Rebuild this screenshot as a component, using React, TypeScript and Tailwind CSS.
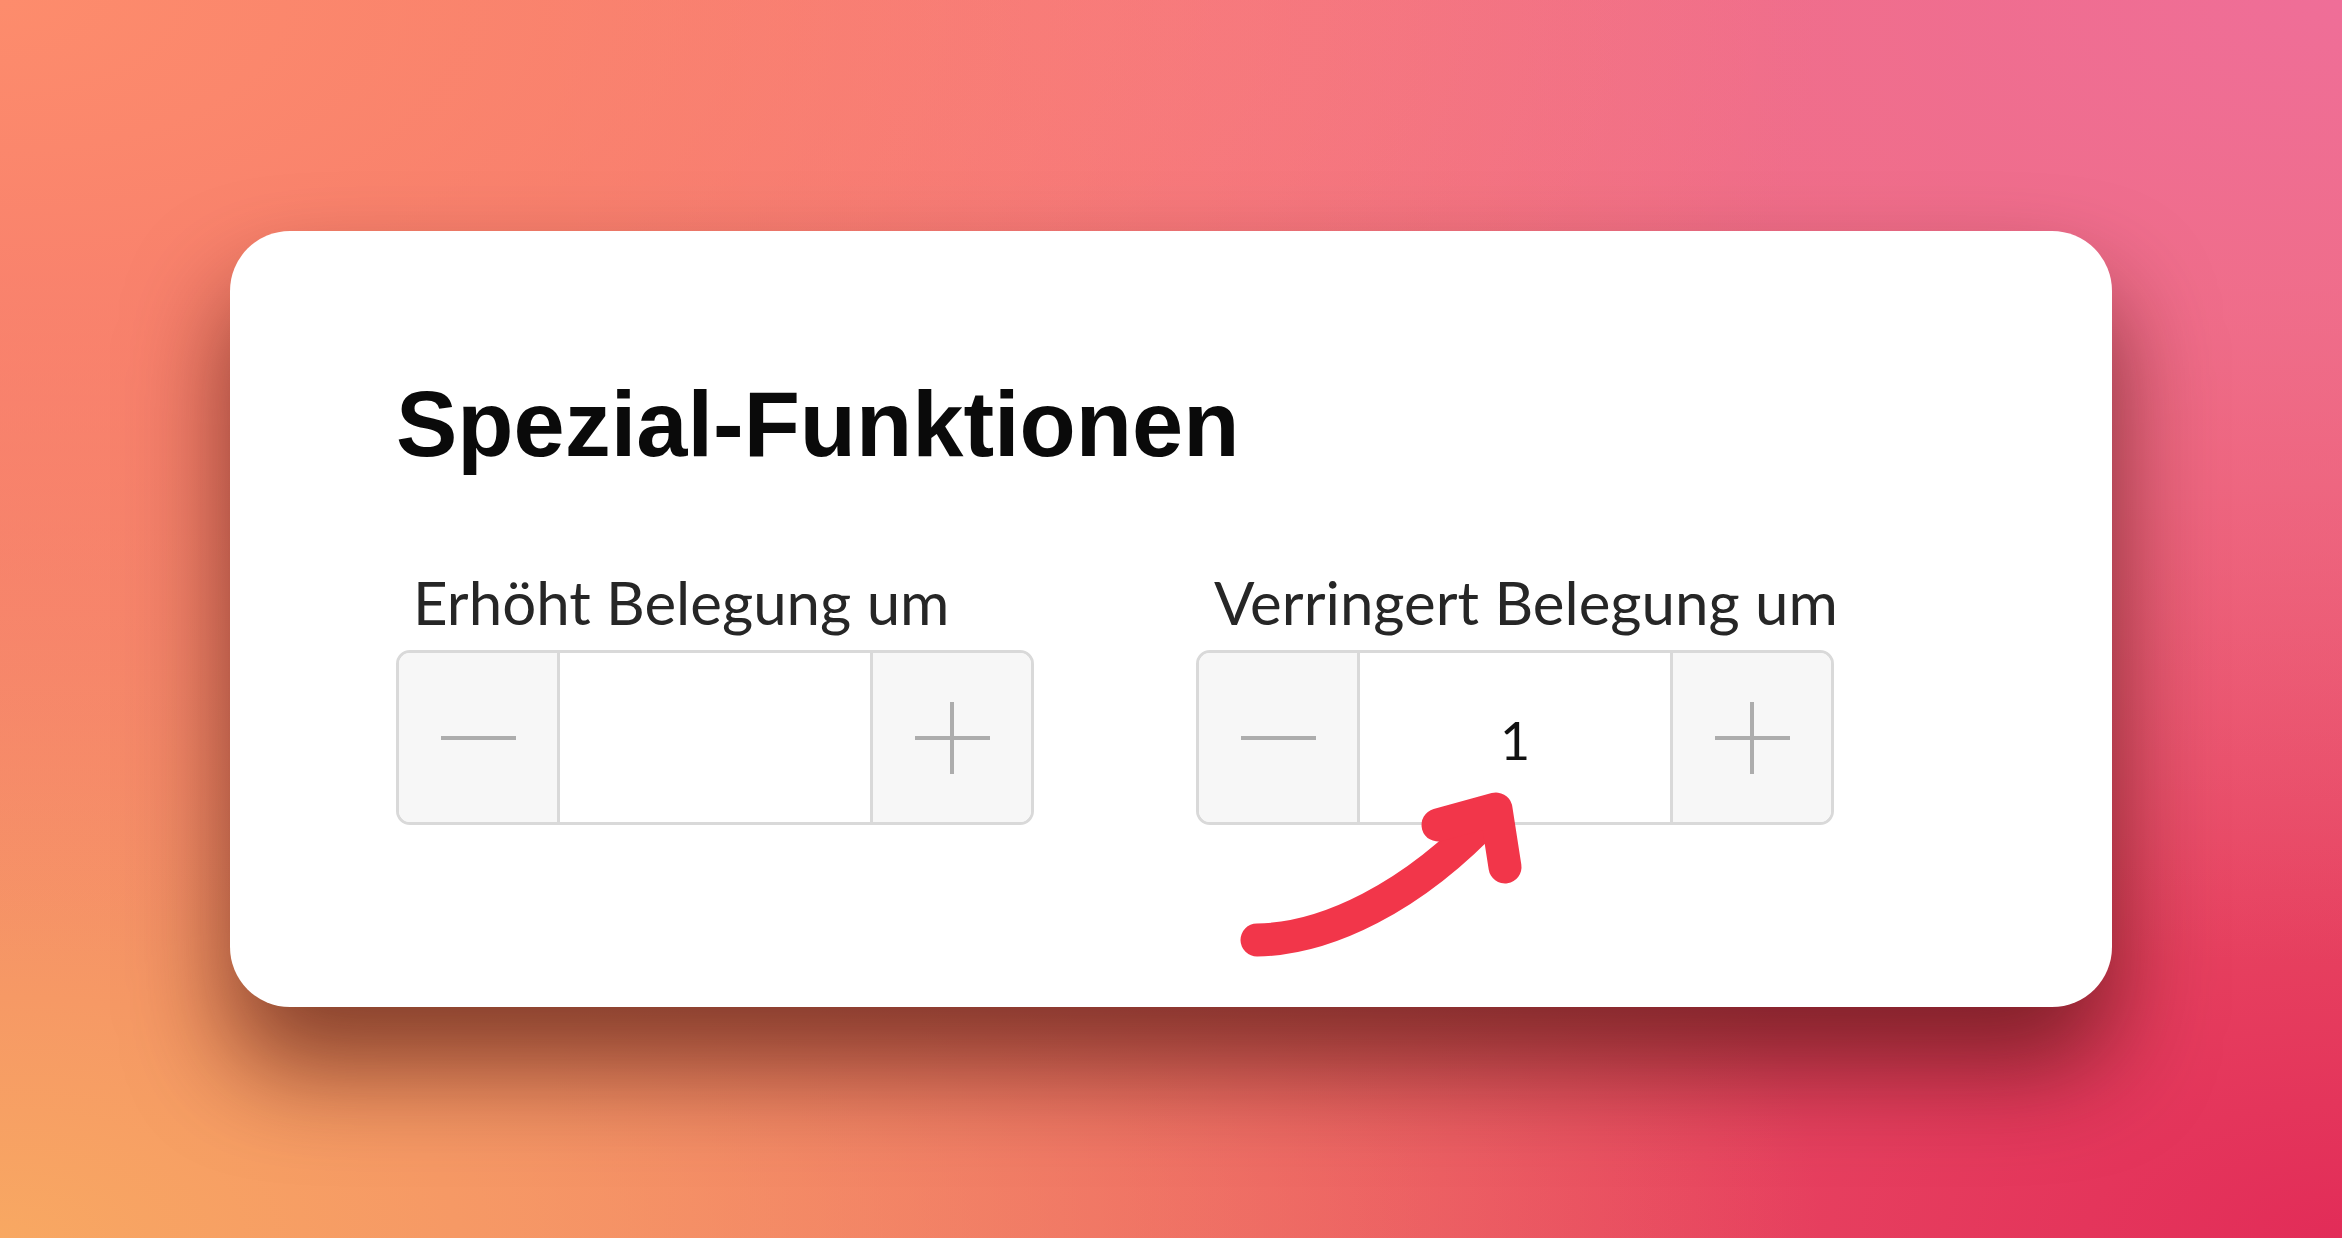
import React from "react";

function Stepper({ value }: { value?: string }) {
  return (
    <div className="flex h-[175px] w-[638px] overflow-hidden rounded-[14px] border-[3px] border-[#d9d9d9]">
      <div className="flex w-[158px] items-center justify-center bg-[#f7f7f7]">
        <div className="h-[4px] w-[75px] bg-[#adadad]" />
      </div>
      <div className="flex flex-1 items-center justify-center border-x-[3px] border-[#d9d9d9] bg-white">
        <span className="pt-[4px] font-['Lato',sans-serif] text-[52px] leading-none text-[#111111]">{value}</span>
      </div>
      <div className="relative flex w-[158px] items-center justify-center bg-[#f7f7f7]">
        <div className="h-[4px] w-[75px] bg-[#adadad]" />
        <div className="absolute h-[72px] w-[4px] bg-[#adadad]" />
      </div>
    </div>
  );
}

export default function App() {
  return (
    <div className="flex h-[1238px] w-full items-center justify-center overflow-hidden bg-[#f06c6e] bg-[radial-gradient(at_0%_0%,#fd8c6c_0%,transparent_55%),radial-gradient(at_100%_0%,#ef6e98_0%,transparent_55%),radial-gradient(at_0%_100%,#f8a862_0%,transparent_55%),radial-gradient(at_100%_100%,#e22c58_0%,transparent_55%),radial-gradient(at_50%_0%,#f7727a_0%,transparent_50%)]">
      <div className="relative h-[776px] w-[1882px] rounded-[60px] bg-white pl-[166px] pt-[147px] shadow-[0_60px_100px_rgba(70,15,10,0.65)]">
        <h1 className="font-['Liberation_Sans',Arial,sans-serif] text-[92px] font-bold leading-none text-[#0a0a0a]">
          Spezial-Funktionen
        </h1>
        <div className="mt-[102px] flex gap-[162px]">
          <div className="flex flex-col">
            <div className="pl-[17px] font-['Lato',sans-serif] text-[60px] leading-none text-[#262626]">
              Erhöht Belegung um
            </div>
            <div className="mt-[18px]">
              <Stepper />
            </div>
          </div>
          <div className="flex flex-col">
            <div className="pl-[18px] font-['Lato',sans-serif] text-[60px] leading-none text-[#262626]">
              Verringert Belegung um
            </div>
            <div className="mt-[18px]">
              <Stepper value="1" />
            </div>
          </div>
        </div>
        <svg
          className="pointer-events-none absolute left-0 top-0"
          width="1882"
          height="776"
          viewBox="0 0 1882 776"
          fill="none"
        >
          <path
            d="M1027 709 C 1095 708, 1182 668, 1262 582"
            stroke="#f2364a"
            strokeWidth={33}
            strokeLinecap="round"
            strokeLinejoin="round"
          />
          <path
            d="M1208 594 L1266 578 L1275 636"
            stroke="#f2364a"
            strokeWidth={33}
            strokeLinecap="round"
            strokeLinejoin="round"
          />
        </svg>
      </div>
    </div>
  );
}
